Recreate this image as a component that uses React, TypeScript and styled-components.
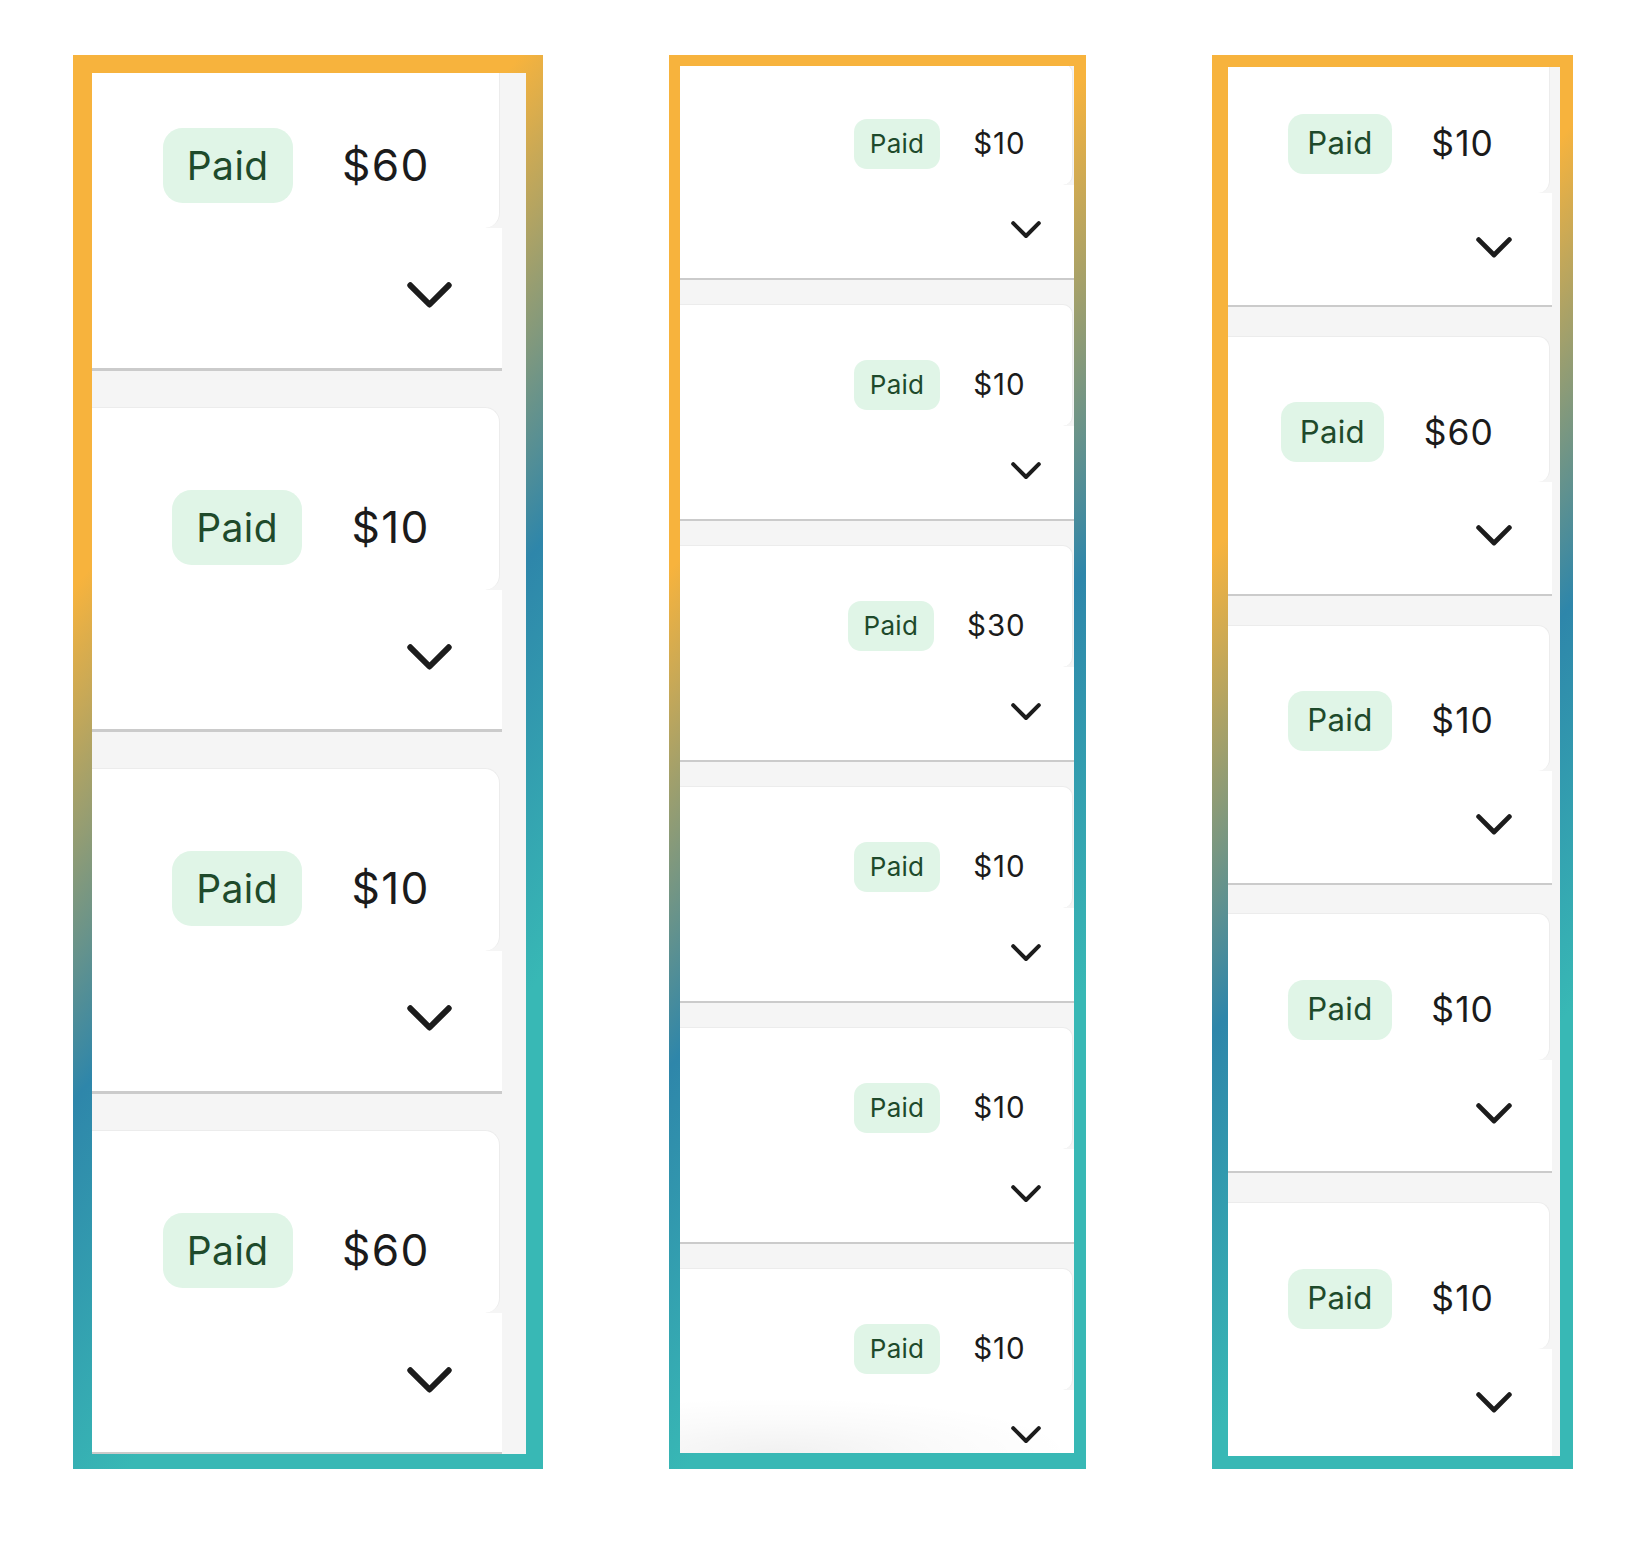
import React from 'react';
import styled, { createGlobalStyle } from 'styled-components';

const GlobalStyle = createGlobalStyle`
  html, body {
    margin: 0;
    padding: 0;
    background: #ffffff;
  }
  body {
    font-family: Inter, "Noto Sans", sans-serif;
  }
`;

const Page = styled.div`
  width: 1646px;
  height: 1551px;
  box-sizing: border-box;
  padding-top: 55px;
  display: flex;
  justify-content: center;
  align-items: flex-start;
  gap: 126px;
`;

type FrameProps = {
  $w: number;
  $bt: number;
  $br: number;
  $bb: number;
  $bl: number;
};

const Frame = styled.div<FrameProps>`
  width: ${(p) => p.$w}px;
  height: 1414px;
  box-sizing: border-box;
  padding: ${(p) => `${p.$bt}px ${p.$br}px ${p.$bb}px ${p.$bl}px`};
  background: linear-gradient(
    130deg,
    #f7b33d 0%,
    #f7b33d 27%,
    #2e86aa 53%,
    #38b8b5 75%,
    #38b8b5 100%
  );
  display: flex;
  flex-shrink: 0;
`;

const Screen = styled.div<{ $s: number }>`
  --s: ${(p) => p.$s};
  flex: 1;
  position: relative;
  overflow: hidden;
  background: #f5f5f5;
`;

const List = styled.div<{ $offset: number; $strip: number }>`
  margin-top: ${(p) => p.$offset}px;
  padding-right: ${(p) => p.$strip}px;
  display: flex;
  flex-direction: column;
  gap: calc(24px * var(--s));
`;

const Card = styled.div`
  flex-shrink: 0;
  display: flex;
  flex-direction: column;
  border-bottom: calc(2px * var(--s)) solid #cbcbcb;
`;

const Header = styled.div`
  height: calc(122px * var(--s));
  box-sizing: border-box;
  margin-right: calc(1.5px * var(--s));
  padding: calc(55px * var(--s)) calc(47px * var(--s)) calc(17px * var(--s)) 0;
  background: #ffffff;
  border-top: 1px solid #ececec;
  border-right: 1px solid #ececec;
  border-radius: 0 calc(10px * var(--s)) calc(10px * var(--s)) 0;
  display: flex;
  justify-content: flex-end;
  align-items: center;
  gap: calc(33px * var(--s));
`;

const Badge = styled.span`
  height: calc(50px * var(--s));
  box-sizing: border-box;
  padding: 0 calc(16px * var(--s));
  border-radius: calc(13px * var(--s));
  background: #e0f5e7;
  color: #1e4a2b;
  font-size: calc(26px * var(--s));
  line-height: 1;
  display: inline-flex;
  align-items: center;
  letter-spacing: 0.01em;
`;

const Amount = styled.span`
  color: #1b1b1b;
  font-size: calc(29.5px * var(--s));
  line-height: 1;
  letter-spacing: 0.03em;
  margin-right: calc(-1px * var(--s));
`;

const ChevronRow = styled.div`
  height: calc(93px * var(--s));
  box-sizing: border-box;
  padding: calc(36px * var(--s)) calc(33.5px * var(--s)) 0 0;
  background: #ffffff;
  display: flex;
  justify-content: flex-end;
  align-items: flex-start;
`;

const ChevronIcon = styled.svg`
  width: calc(30px * var(--s));
  height: calc(18px * var(--s));
  display: block;
`;

const BottomShade = styled.div`
  position: absolute;
  left: 0;
  right: 0;
  bottom: 0;
  height: 56px;
  pointer-events: none;
  background: radial-gradient(
    ellipse 75% 100% at 25% 100%,
    rgba(0, 0, 0, 0.055) 0%,
    rgba(0, 0, 0, 0.02) 55%,
    rgba(0, 0, 0, 0) 100%
  );
`;

const Chevron = () => (
  <ChevronIcon viewBox="0 0 30 18" fill="none">
    <path
      d="M2.2 2.2 L15 15 L27.8 2.2"
      stroke="#1c1c1c"
      strokeWidth="4"
      strokeLinecap="round"
      strokeLinejoin="round"
    />
  </ChevronIcon>
);

type PanelDef = {
  w: number;
  border: [number, number, number, number];
  s: number;
  offset: number;
  strip: number;
  amounts: number[];
  shade?: boolean;
};

const panels: PanelDef[] = [
  { w: 470, border: [18, 17, 15, 19], s: 1.5, offset: -28, strip: 24, amounts: [60, 10, 10, 60] },
  { w: 417, border: [11, 12, 16, 11], s: 1, offset: -3, strip: 0, amounts: [10, 10, 30, 10, 10, 10], shade: true },
  { w: 361, border: [12, 13, 13, 16], s: 1.2, offset: -20, strip: 8, amounts: [10, 60, 10, 10, 10] },
];

const PaymentCard = ({ amount }: { amount: number }) => (
  <Card>
    <Header>
      <Badge>Paid</Badge>
      <Amount>${amount}</Amount>
    </Header>
    <ChevronRow>
      <Chevron />
    </ChevronRow>
  </Card>
);

export default function App() {
  return (
    <>
      <GlobalStyle />
      <Page>
        {panels.map((p, i) => (
          <Frame key={i} $w={p.w} $bt={p.border[0]} $br={p.border[1]} $bb={p.border[2]} $bl={p.border[3]}>
            <Screen $s={p.s}>
              <List $offset={p.offset} $strip={p.strip}>
                {p.amounts.map((a, j) => (
                  <PaymentCard key={j} amount={a} />
                ))}
              </List>
              {p.shade && <BottomShade />}
            </Screen>
          </Frame>
        ))}
      </Page>
    </>
  );
}
